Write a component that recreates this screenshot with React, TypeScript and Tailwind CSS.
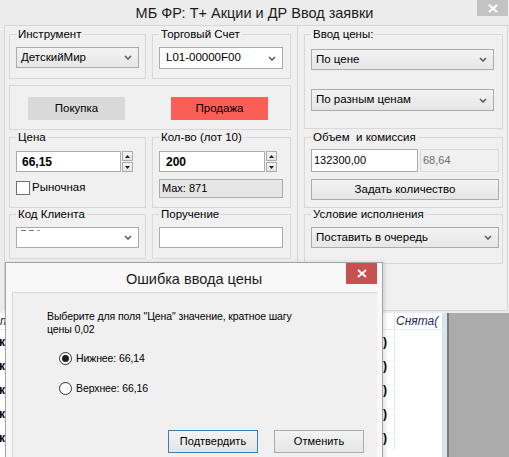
import type { ReactNode } from "react";

function Chevron() {
  return (
    <svg width="8" height="5" viewBox="0 0 8 5">
      <path d="M1 1l3 3 3-3" fill="none" stroke="#5e5e5e" strokeWidth="1.6" />
    </svg>
  );
}

function CloseX({ color = "#ffffff" }: { color?: string }) {
  return (
    <svg width="10" height="9" viewBox="0 0 10 9">
      <path d="M1 1l8 7M9 1l-8 7" stroke={color} strokeWidth="2" />
    </svg>
  );
}

function Group({ label, className, children }: { label: string; className: string; children: ReactNode }) {
  return (
    <fieldset className={"border border-[#d9d9d9] " + className}>
      <legend className="ml-[6px] whitespace-pre px-[2px] text-[11.5px] leading-[12px] text-black">{label}</legend>
      {children}
    </fieldset>
  );
}

function Combo({ text, className, white }: { text: ReactNode; className: string; white?: boolean }) {
  return (
    <div
      className={
        "flex items-center justify-between border border-[#acacac] pl-[4px] pr-[6px] text-[11.5px] " +
        (white ? "bg-white " : "bg-linear-to-b from-[#f3f3f3] to-[#e6e6e6] ") +
        className
      }
    >
      <span className="whitespace-nowrap">{text}</span>
      <Chevron />
    </div>
  );
}

function Spinner() {
  return (
    <div className="ml-px flex w-[11px] flex-col gap-px">
      <div className="flex h-[10px] items-center justify-center border border-[#acacac] bg-linear-to-b from-[#f3f3f3] to-[#e5e5e5]">
        <svg width="5" height="3" viewBox="0 0 5 3"><path d="M0 3h5L2.5 0z" fill="#222" /></svg>
      </div>
      <div className="flex h-[10px] items-center justify-center border border-[#acacac] bg-linear-to-b from-[#f3f3f3] to-[#e5e5e5]">
        <svg width="5" height="3" viewBox="0 0 5 3"><path d="M0 0h5L2.5 3z" fill="#222" /></svg>
      </div>
    </div>
  );
}

function WinButton({ label, className }: { label: string; className: string }) {
  return (
    <div className={"flex items-center justify-center bg-linear-to-b from-[#f3f3f3] to-[#e5e5e5] " + className}>
      {label}
    </div>
  );
}

const rows = [0, 1, 2, 3, 4];

export default function App() {
  return (
    <div className="relative h-[457px] w-[509px] overflow-hidden bg-white font-['Liberation_Sans',Arial,sans-serif] text-black">
      {/* main order window */}
      <div className="flex h-[313px] flex-col bg-[#ececec]">
        <div className="grid h-[25px] grid-cols-[1fr_auto_1fr]">
          <div />
          <div className="self-center pt-[1px] text-[14.5px] leading-[18px] text-[#1b1b1b]">МБ ФР: Т+ Акции и ДР Ввод заявки</div>
          <div className="flex justify-end pr-[1px]">
            <div className="flex h-[16px] w-[31px] items-center justify-center bg-[#c3c3c3]">
              <CloseX />
            </div>
          </div>
        </div>

        <div className="ml-[4px] flex h-[286px] border-t border-[#d6d6d6] bg-[#f0f0f0]">
          {/* left pane */}
          <div className="flex w-[294px] flex-col border-x border-[#d6d6d6] pl-[4px]">
            <div className="mt-[2px] flex gap-[6px]">
              <Group label="Инструмент" className="h-[51px] w-[137px]">
                <div className="pl-[6px] pt-[7px]">
                  <Combo text="ДетскийМир" className="h-[21px] w-[123px]" />
                </div>
              </Group>
              <Group label="Торговый Счет" className="h-[51px] w-[139px]">
                <div className="pl-[6px] pt-[7px]">
                  <Combo text={<span className="pl-[2px]">L01-00000F00</span>} white className="h-[22px] w-[124px]" />
                </div>
              </Group>
            </div>

            <div className="mt-[6px] flex h-[45px] w-[282px] gap-[46px] border border-[#d9d9d9] pl-[18px] pt-[11px] text-[11.5px]">
              <div className="flex h-[23px] w-[97px] items-center justify-center bg-[#d9d9d9]">Покупка</div>
              <div className="flex h-[23px] w-[97px] items-center justify-center bg-[#f95e57]">Продажа</div>
            </div>

            <div className="mt-[1px] flex gap-[6px]">
              <Group label="Цена" className="h-[77px] w-[137px]">
                <div className="pl-[6px] pt-[8px]">
                  <div className="flex">
                    <div className="flex h-[21px] w-[105px] items-center border border-[#acacac] bg-white pl-[5px] text-[12px] font-bold">66,15</div>
                    <Spinner />
                  </div>
                  <div className="mt-[7px] flex items-center gap-[2px]">
                    <div className="h-[14px] w-[14px] border border-[#6f6f6f] bg-white" />
                    <span className="text-[11.5px]">Рыночная</span>
                  </div>
                </div>
              </Group>
              <Group label="Кол-во (лот 10)" className="h-[77px] w-[139px]">
                <div className="pl-[6px] pt-[8px]">
                  <div className="flex">
                    <div className="flex h-[21px] w-[106px] items-center border border-[#acacac] bg-white pl-[6px] text-[12px] font-bold">200</div>
                    <Spinner />
                  </div>
                  <div className="mt-[7px] flex h-[19px] w-[124px] items-center border border-[#acacac] bg-[#e6e6e6] pl-[2px] text-[11px]">Max: 871</div>
                </div>
              </Group>
            </div>

            <div className="flex gap-[6px]">
              <Group label="Код Клиента" className="h-[51px] w-[137px]">
                <div className="pl-[6px] pt-[7px]">
                  <div className="flex h-[21px] w-[123px] items-center justify-between border border-[#acacac] bg-white pl-[4px] pr-[6px]">
                    <div className="flex gap-[3px] self-start pt-[2px]">
                      <div className="h-px w-[5px] bg-[#777]" />
                      <div className="h-px w-[5px] bg-[#777]" />
                      <div className="h-px w-[3px] bg-[#999]" />
                    </div>
                    <Chevron />
                  </div>
                </div>
              </Group>
              <Group label="Поручение" className="h-[51px] w-[139px]">
                <div className="pl-[6px] pt-[7px]">
                  <div className="h-[21px] w-[124px] border border-[#acacac] bg-white" />
                </div>
              </Group>
            </div>
          </div>

          {/* right pane */}
          <div className="flex w-[210px] flex-col border-r border-b border-[#d6d6d6] pl-[6px]">
            <Group label="Ввод цены:" className="mt-[2px] h-[101px] w-[199px]">
              <div className="pl-[6px] pt-[9px]">
                <Combo text="По цене" className="h-[21px] w-[183px]" />
                <Combo text="По разным ценам" className="mt-[19px] h-[22px] w-[183px]" />
              </div>
            </Group>
            <Group label="Объем  и комиссия" className="mt-[2px] h-[77px] w-[199px]">
              <div className="pl-[6px] pt-[6px]">
                <div className="flex gap-[2px] text-[11px]">
                  <div className="flex h-[23px] w-[107px] items-center border border-[#acacac] bg-white pl-[2px]">132300,00</div>
                  <div className="flex h-[23px] w-[79px] items-center border border-[#d9d9d9] bg-[#f0f0f0] pl-[2px] text-[#6d6d6d]">68,64</div>
                </div>
                <WinButton label="Задать количество" className="mt-[7px] h-[21px] w-[188px] border border-[#acacac] text-[11.5px]" />
              </div>
            </Group>
            <Group label="Условие исполнения" className="h-[56px] w-[199px]">
              <div className="pl-[6px] pt-[7px]">
                <Combo text="Поставить в очередь" className="h-[21px] w-[188px]" />
              </div>
            </Group>
          </div>
        </div>
      </div>

      {/* table of the window behind */}
      <div className="flex h-[144px]">
        <div className="grid w-[442px] grid-cols-[394px_48px] grid-rows-[17px_repeat(5,24px)]">
          <div className="border-b border-[#e2eaf3] text-[12px] italic leading-[17px] text-[#1d2a5c]">т</div>
          <div className="overflow-hidden whitespace-nowrap border-b border-l border-[#e2eaf3] pl-[1px] text-[12px] italic leading-[17px] text-[#1d2a5c]">Снята(</div>
          {rows.map((r) => (
            <div key={r} className="contents">
              <div className="flex items-center justify-between pr-[7px] text-[12px] font-bold">
                <span className="-ml-[1px]">кı</span>
                <span>0)</span>
              </div>
              <div className="border-l border-[#e2eaf3]" />
            </div>
          ))}
        </div>
        <div className="w-[5px] bg-[#d8e4f0]" />
        <div className="w-[2px] bg-[#7a7a7a]" />
        <div className="flex-1 bg-[#ababab]" />
      </div>

      {/* price error dialog */}
      <div className="absolute left-[5px] top-[262px] flex h-[200px] w-[378px] flex-col border border-[#a3a3a3] bg-[#f8f8f8] shadow-[2px_0_4px_rgba(0,0,0,0.12)]">
        <div className="grid h-[29px] grid-cols-[1fr_auto_1fr]">
          <div />
          <div className="self-center pt-[2px] text-[14.5px] leading-[18px] text-[#1b1b1b]">Ошибка ввода цены</div>
          <div className="flex justify-end pr-[5px]">
            <div className="flex h-[21px] w-[31px] items-center justify-center bg-[#c75050]">
              <CloseX />
            </div>
          </div>
        </div>
        <div className="ml-[6px] w-[365px] flex-1 border-l border-t border-[#dadada] bg-[#f0f0f0] pl-[34px] pt-[17px] text-[10.5px] tracking-[-0.1px]">
          <div className="leading-[13px]">
            Выберите для поля &quot;Цена&quot; значение, кратное шагу
            <br />
            цены 0,02
          </div>
          <div className="mt-[15px] flex items-center gap-[4px] pl-[12px]">
            <div className="flex h-[13px] w-[13px] items-center justify-center rounded-full border border-[#333] bg-white">
              <div className="h-[7px] w-[7px] rounded-full bg-[#1e1e1e]" />
            </div>
            <span className="leading-[14px]">Нижнее: 66,14</span>
          </div>
          <div className="mt-[16px] flex items-center gap-[4px] pl-[12px]">
            <div className="h-[13px] w-[13px] rounded-full border border-[#333] bg-white" />
            <span className="leading-[14px]">Верхнее: 66,16</span>
          </div>
          <div className="mt-[35px] flex gap-[16px] pl-[121px] text-[11px] tracking-normal">
            <WinButton label="Подтвердить" className="h-[23px] w-[90px] border border-[#3c7fb1]" />
            <WinButton label="Отменить" className="h-[23px] w-[90px] border border-[#acacac]" />
          </div>
        </div>
      </div>
    </div>
  );
}
